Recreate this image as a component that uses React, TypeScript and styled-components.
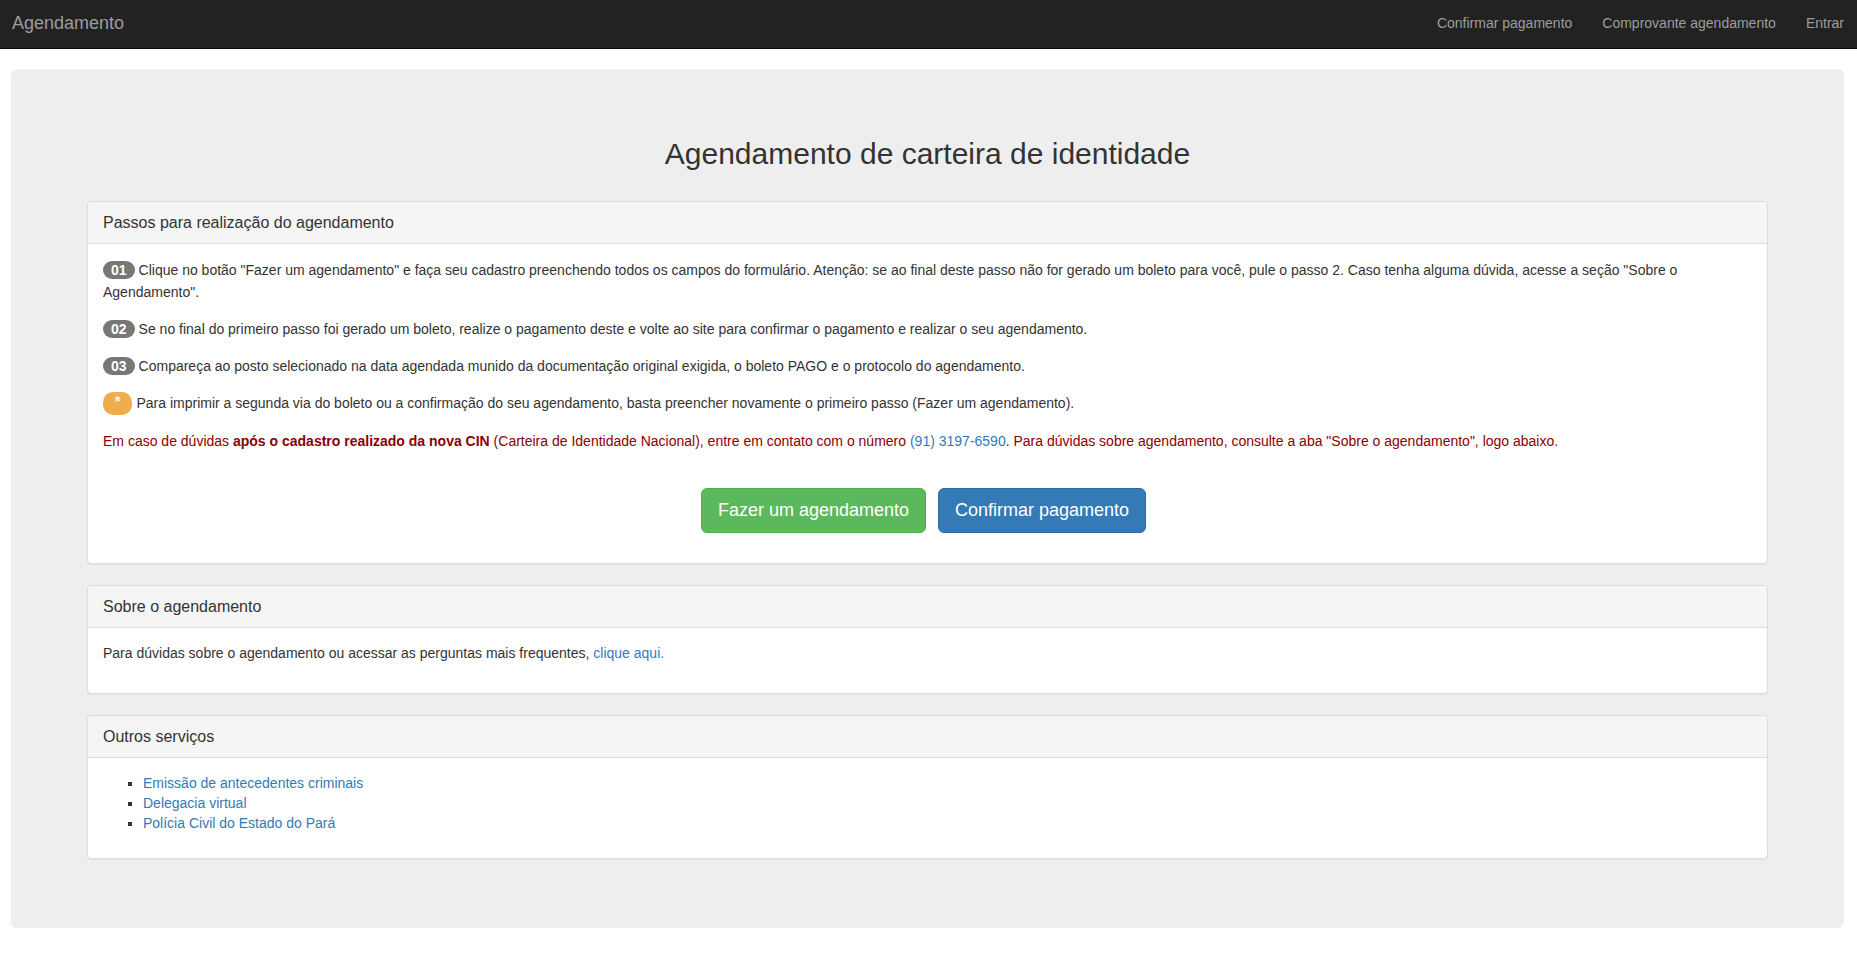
import React from "react";
import styled, { createGlobalStyle } from "styled-components";

const GlobalStyle = createGlobalStyle`
    html, body {
        margin: 0;
        padding: 0;
        background: #fff;
    }
    body {
        font-family: "Liberation Sans", Arial, Helvetica, sans-serif;
        font-size: 14px;
        line-height: 20px;
        color: #333;
    }
    a {
        color: #337ab7;
        text-decoration: none;
    }
`;

const Navbar = styled.nav`
    display: flex;
    align-items: center;
    justify-content: space-between;
    height: 48px;
    padding-left: 12px;
    background: #222;
    border-bottom: 1px solid #080808;
    margin-bottom: 20px;
`;

const Brand = styled.a`
    font-size: 18px;
    line-height: 20px;
    color: #9d9d9d;
    margin-top: -3px;
`;

const NavList = styled.ul`
    display: flex;
    list-style: none;
    margin: -3px 0 0;
    padding: 0;

    li:last-child a {
        padding-right: 13px;
    }
`;

const NavLink = styled.a`
    display: block;
    padding: 0 15px;
    color: #9d9d9d;
    font-size: 14px;
    line-height: 20px;
`;

const Page = styled.div`
    padding: 0 13px 0 11px;
`;

const Jumbotron = styled.div`
    background: #eee;
    border-radius: 6px;
    padding: 48px 76px;
    margin-bottom: 30px;
`;

const Title = styled.h2`
    margin: 20px 0 31px;
    font-size: 30px;
    font-weight: 500;
    line-height: 33px;
    text-align: center;
    color: #333;
`;

const Panel = styled.div`
    background: #fff;
    border: 1px solid #ddd;
    border-radius: 4px;
    box-shadow: 0 1px 1px rgba(0, 0, 0, 0.05);
    margin-bottom: 21px;
`;

const PanelHeading = styled.div`
    padding: 10px 15px;
    line-height: 21px;
    font-size: 16px;
    color: #333;
    background: #f5f5f5;
    border-bottom: 1px solid #ddd;
    border-radius: 3px 3px 0 0;
`;

const PanelBody = styled.div`
    padding: 15px;
`;

const Text = styled.p<{ $lh?: number; $danger?: boolean }>`
    margin: 0 0 15px;
    line-height: ${(p) => p.$lh ?? 22}px;
    color: ${(p) => (p.$danger ? "#8b0000" : "#333")};

    strong {
        font-weight: bold;
    }
`;

const Badge = styled.span<{ $tone?: "gray" | "orange" }>`
    display: inline-block;
    vertical-align: ${(p) => (p.$tone === "orange" ? "2px" : "0")};
    height: ${(p) => (p.$tone === "orange" ? 23 : 18)}px;
    line-height: 18px;
    padding: 0 ${(p) => (p.$tone === "orange" ? 12 : 8)}px;
    border-radius: 10px;
    background: ${(p) => (p.$tone === "orange" ? "#f0ad4e" : "#777")};
    color: #fff;
    font-size: 14px;
    font-weight: bold;
    margin-right: 4px;
`;

const ButtonRow = styled.div`
    display: flex;
    justify-content: center;
    gap: 12px;
    padding: 21px 8px 15px 0;
`;

const Button = styled.a<{ $variant: "success" | "primary" }>`
    display: inline-block;
    padding: 10px 16px;
    font-size: 18px;
    line-height: 23px;
    border-radius: 6px;
    color: #fff;
    background: ${(p) => (p.$variant === "success" ? "#5cb85c" : "#337ab7")};
    border: 1px solid
        ${(p) => (p.$variant === "success" ? "#4cae4c" : "#2e6da4")};
`;

const ServiceList = styled.ul`
    margin: 0 0 10px;
    padding-left: 40px;
    list-style: square;

    li {
        line-height: 20px;
    }
`;

const steps = [
    {
        id: "01",
        text: 'Clique no botão "Fazer um agendamento" e faça seu cadastro preenchendo todos os campos do formulário. Atenção: se ao final deste passo não for gerado um boleto para você, pule o passo 2. Caso tenha alguma dúvida, acesse a seção "Sobre o Agendamento".',
    },
    {
        id: "02",
        text: "Se no final do primeiro passo foi gerado um boleto, realize o pagamento deste e volte ao site para confirmar o pagamento e realizar o seu agendamento.",
    },
    {
        id: "03",
        text: "Compareça ao posto selecionado na data agendada munido da documentação original exigida, o boleto PAGO e o protocolo do agendamento.",
    },
];

const services = [
    "Emissão de antecedentes criminais",
    "Delegacia virtual",
    "Polícia Civil do Estado do Pará",
];

export default function App() {
    return (
        <>
            <GlobalStyle />
            <Navbar>
                <Brand href="#">Agendamento</Brand>
                <NavList>
                    <li>
                        <NavLink href="#">Confirmar pagamento</NavLink>
                    </li>
                    <li>
                        <NavLink href="#">Comprovante agendamento</NavLink>
                    </li>
                    <li>
                        <NavLink href="#">Entrar</NavLink>
                    </li>
                </NavList>
            </Navbar>
            <Page>
                <Jumbotron>
                    <Title>Agendamento de carteira de identidade</Title>

                    <Panel>
                        <PanelHeading>Passos para realização do agendamento</PanelHeading>
                        <PanelBody>
                            {steps.map((s) => (
                                <Text key={s.id}>
                                    <Badge>{s.id}</Badge>
                                    {s.text}
                                </Text>
                            ))}
                            <Text>
                                <Badge $tone="orange">*</Badge>
                                Para imprimir a segunda via do boleto ou a confirmação do seu
                                agendamento, basta preencher novamente o primeiro passo (Fazer um
                                agendamento).
                            </Text>
                            <Text $danger>
                                Em caso de dúvidas <strong>após o cadastro realizado da nova CIN</strong>{" "}
                                (Carteira de Identidade Nacional), entre em contato com o número{" "}
                                <a href="#">(91) 3197-6590</a>. Para dúvidas sobre agendamento,
                                consulte a aba "Sobre o agendamento", logo abaixo.
                            </Text>
                            <ButtonRow>
                                <Button $variant="success" href="#">
                                    Fazer um agendamento
                                </Button>
                                <Button $variant="primary" href="#">
                                    Confirmar pagamento
                                </Button>
                            </ButtonRow>
                        </PanelBody>
                    </Panel>

                    <Panel>
                        <PanelHeading>Sobre o agendamento</PanelHeading>
                        <PanelBody>
                            <Text $lh={20}>
                                Para dúvidas sobre o agendamento ou acessar as perguntas mais
                                frequentes, <a href="#">clique aqui.</a>
                            </Text>
                        </PanelBody>
                    </Panel>

                    <Panel>
                        <PanelHeading>Outros serviços</PanelHeading>
                        <PanelBody>
                            <ServiceList>
                                {services.map((s) => (
                                    <li key={s}>
                                        <a href="#">{s}</a>
                                    </li>
                                ))}
                            </ServiceList>
                        </PanelBody>
                    </Panel>
                </Jumbotron>
            </Page>
        </>
    );
}
